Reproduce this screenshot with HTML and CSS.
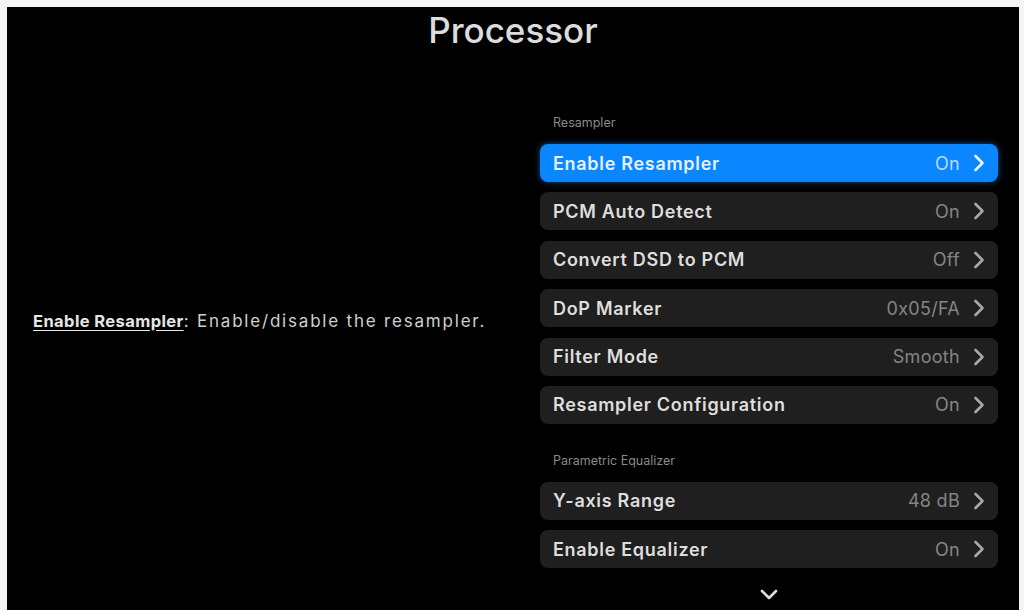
FILE: index.html
```html
<!DOCTYPE html>
<html lang="en">
<head>
<meta charset="utf-8">
<title>Processor</title>
<link rel="stylesheet" href="styles.css">
</head>
<body>
<div class="screen">
  <h1 class="title">Processor</h1>
  <div class="main">
    <div class="help">
      <p class="help-text"><span class="help-key">Enable Resampler</span><span class="help-desc">: Enable/disable the resampler.</span></p>
    </div>
    <div class="list">
      <div class="section first">Resampler</div>
      <div class="row active"><span class="label">Enable Resampler</span><span class="value">On</span><svg class="chev" viewBox="0 0 12 18"><path d="M2.5 2 L9.5 9 L2.5 16"/></svg></div>
      <div class="row"><span class="label">PCM Auto Detect</span><span class="value">On</span><svg class="chev" viewBox="0 0 12 18"><path d="M2.5 2 L9.5 9 L2.5 16"/></svg></div>
      <div class="row"><span class="label">Convert DSD to PCM</span><span class="value">Off</span><svg class="chev" viewBox="0 0 12 18"><path d="M2.5 2 L9.5 9 L2.5 16"/></svg></div>
      <div class="row"><span class="label">DoP Marker</span><span class="value">0x05/FA</span><svg class="chev" viewBox="0 0 12 18"><path d="M2.5 2 L9.5 9 L2.5 16"/></svg></div>
      <div class="row"><span class="label">Filter Mode</span><span class="value">Smooth</span><svg class="chev" viewBox="0 0 12 18"><path d="M2.5 2 L9.5 9 L2.5 16"/></svg></div>
      <div class="row"><span class="label">Resampler Configuration</span><span class="value">On</span><svg class="chev" viewBox="0 0 12 18"><path d="M2.5 2 L9.5 9 L2.5 16"/></svg></div>
      <div class="section">Parametric Equalizer</div>
      <div class="row"><span class="label">Y-axis Range</span><span class="value">48 dB</span><svg class="chev" viewBox="0 0 12 18"><path d="M2.5 2 L9.5 9 L2.5 16"/></svg></div>
      <div class="row"><span class="label">Enable Equalizer</span><span class="value">On</span><svg class="chev" viewBox="0 0 12 18"><path d="M2.5 2 L9.5 9 L2.5 16"/></svg></div>
      <div class="more"><svg class="down" viewBox="0 0 20 12"><path d="M3 2 L10 9 L17 2"/></svg></div>
    </div>
  </div>
</div>
</body>
</html>
```

FILE: styles.css
```css
* { box-sizing: border-box; }
html, body {
  margin: 0;
  padding: 0;
  height: 100%;
  background: #f4f4f4;
}
body {
  padding: 7px 5px 0 7px;
  font-family: Inter, "Noto Sans", "Liberation Sans", sans-serif;
  overflow: hidden;
}
.screen {
  background: #000;
  height: 603px;
  display: flex;
  flex-direction: column;
}
.title {
  margin: 0;
  padding-top: 3px;
  height: 52px;
  text-align: center;
  font-size: 35px;
  line-height: 40px;
  font-weight: 500;
  color: #dcdcdc;
}
.main {
  flex: 1;
  display: flex;
}
.help {
  width: 533px;
  display: flex;
  align-items: center;
  padding-left: 26px;
  padding-bottom: 28px;
}
.help-text {
  margin: 0;
  font-size: 16.5px;
  color: #cfcfcf;
  white-space: nowrap;
}
.help-key {
  font-weight: 700;
  color: #e6e6e6;
  letter-spacing: 0.4px;
  text-decoration: underline;
  text-underline-offset: 3px;
}
.help-desc {
  font-size: 17px;
  letter-spacing: 1.8px;
}
.list {
  width: 458px;
  display: flex;
  flex-direction: column;
  padding-top: 56px;
}
.section {
  font-size: 12.5px;
  line-height: 16px;
  color: #8a8a8a;
  padding-left: 13px;
  margin-top: 18.6px;
  margin-bottom: 13px;
}
.section.first { margin-top: 0; }
.row {
  height: 38px;
  margin-bottom: 10.4px;
  background: #1f1f1f;
  border-radius: 8px;
  display: flex;
  align-items: center;
  padding: 0 13px 0 13px;
  font-size: 18px;
}
.row .label {
  flex: 1;
  font-weight: 600;
  letter-spacing: 0.7px;
  color: #dedede;
}
.row .value {
  color: #858585;
  letter-spacing: 0.3px;
  margin-right: 13px;
}
.chev {
  width: 12px;
  height: 18px;
  fill: none;
  stroke: #a8a8a8;
  stroke-width: 2.6;
  stroke-linecap: round;
  stroke-linejoin: round;
}
.row.active {
  background: #0a86ff;
  box-shadow: 0 0 6px rgba(20, 140, 255, 0.55);
}
.row.active .label { color: #e4f0ff; }
.row.active .value { color: #b9dcff; }
.row.active .chev { stroke: #e8f3ff; }
.more {
  display: flex;
  justify-content: center;
  padding-top: 10px;
}
.down {
  width: 20px;
  height: 12px;
  fill: none;
  stroke: #e0e0e0;
  stroke-width: 2.6;
  stroke-linecap: round;
  stroke-linejoin: round;
}
```
